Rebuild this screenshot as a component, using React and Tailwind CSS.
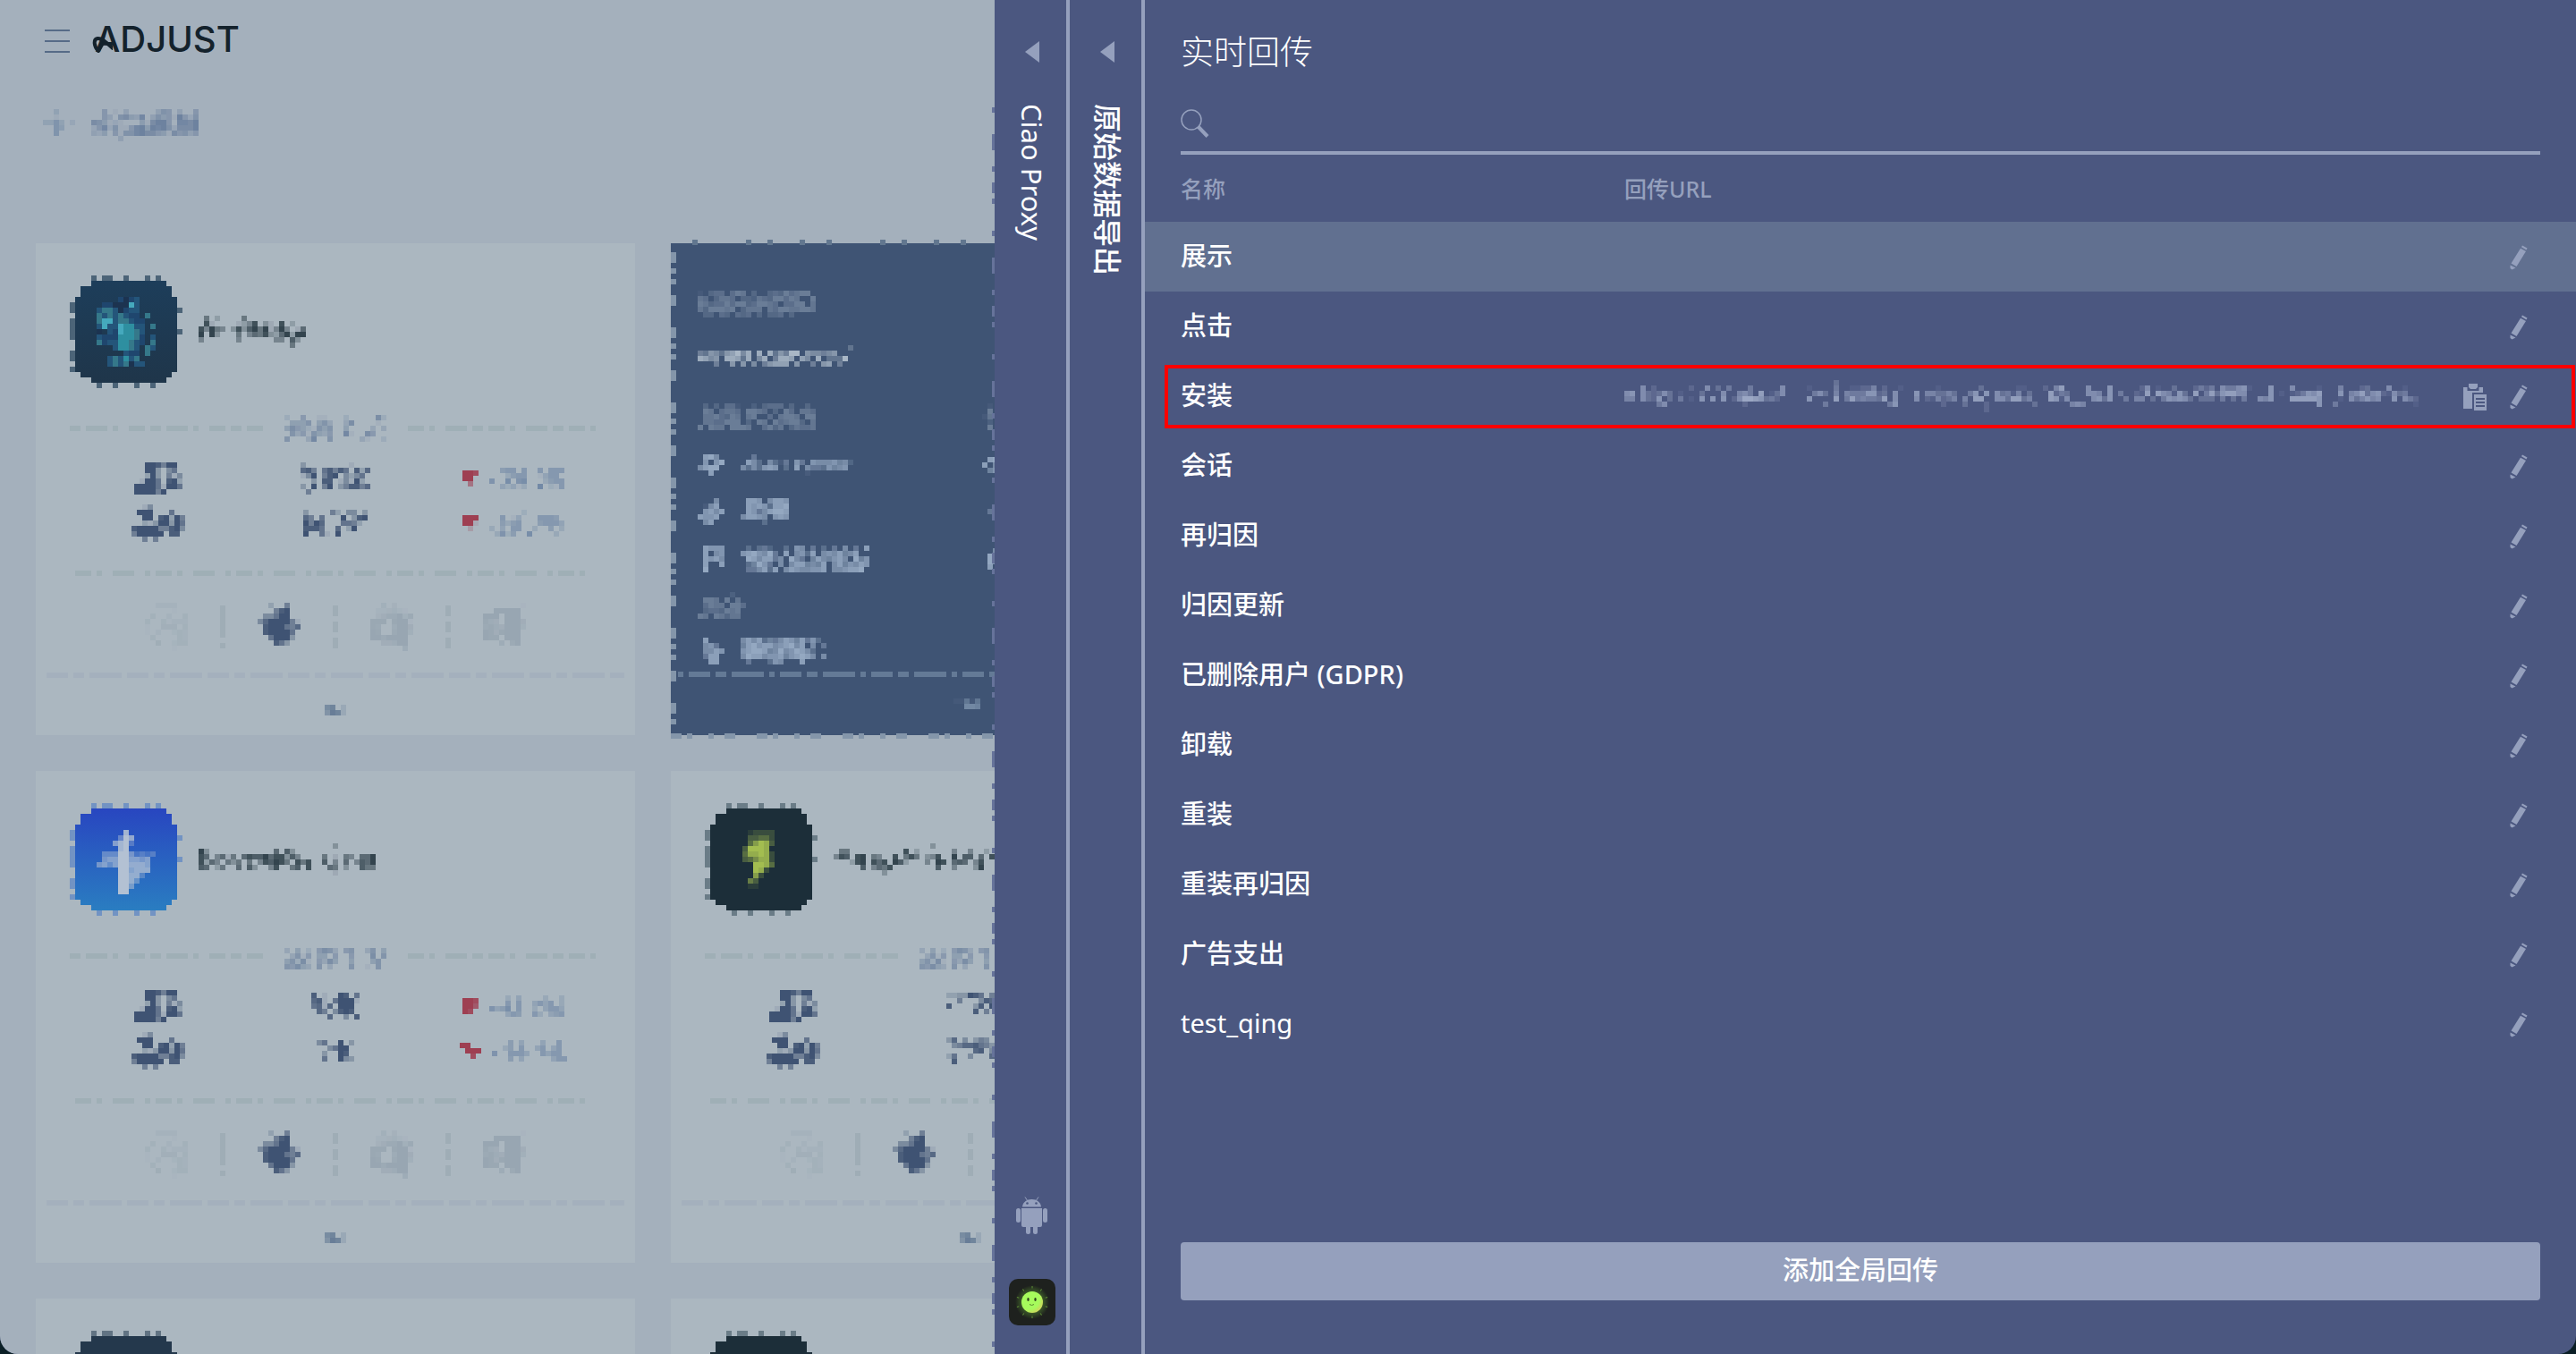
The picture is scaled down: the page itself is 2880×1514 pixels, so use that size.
import React from 'react';

const CELL = 6;

// A row is either plain digits ("..53.6") or sparse runs ("3:64 12:2").
// Digits are opacity steps, "." is empty.
function rowCells(row) {
  const runs = row.includes(':') ? row.split(' ').map((r) => r.split(':')) : [['0', row]];
  return runs.flatMap(([start, chars]) =>
    chars.split('').map((c, i) => ({ x: Number(start) + i, c })).filter((cell) => cell.c !== '.')
  );
}

function Mosaic({ rows, cols, color, palette, className = '' }) {
  const w = (cols || rows[0].length) * CELL;
  const h = rows.length * CELL;
  return (
    <svg
      aria-hidden="true"
      className={`shrink-0 ${className}`}
      width={w}
      height={h}
      viewBox={`0 0 ${w} ${h}`}
      shapeRendering="crispEdges"
    >
      {rows.map((row, y) =>
        rowCells(row).map(({ x, c }) => (
          <rect
            key={`${x}-${y}`}
            x={x * CELL}
            y={y * CELL}
            width={CELL}
            height={CELL}
            fill={palette ? palette[c] : color}
            fillOpacity={palette ? 1 : Number(c) / 9}
          />
        ))
      )}
    </svg>
  );
}

function DashX({ color, dash, className = '' }) {
  return (
    <svg aria-hidden="true" className={`h-[6px] ${className}`} shapeRendering="crispEdges">
      <line x1="0" y1="3" x2="2000" y2="3" stroke={color} strokeWidth="6" strokeDasharray={dash} />
    </svg>
  );
}

function DashY({ color, dash, className = '' }) {
  return (
    <svg aria-hidden="true" className={`w-[6px] ${className}`} shapeRendering="crispEdges">
      <line x1="3" y1="0" x2="3" y2="2000" stroke={color} strokeWidth="6" strokeDasharray={dash} />
    </svg>
  );
}

const TOOL_TEXT = [
  '..5.1.3.....365.3..5',
  '..53.67438.364519526',
  '764121...417995.8879',
  '25826115894989627779',
  '324.5166897754175635',
  '.....3..............',
];

const NAMES = {
  orbit: {
    cols: 20,
    rows: [
      '.5.2....5...........',
      '.81....1248.31.8.2..',
      '84954.38379591494.16',
      '9.93...5.46583269299',
      '4......4......44.73.',
      '.................5..',
    ],
  },
  bolt: {
    cols: 33,
    rows: [
      '25:3',
      '0:93 14:6 16:73',
      '0:86 3:46 5:15 8:68 10:779 13:688 16:37 18:4 23:5 25:1 27:54 30:669',
      '0:8264 5:53 7:5 9:5 11:48 13:7985 18:85 20:8 23:7 25:4 27:6 29:4769',
      '0:76 3:25 7:6 9:73 13:48 17:57 20:8 24:65 27:3 30:755',
      '25:1',
    ],
  },
  drop: {
    cols: 34,
    rows: [
      '18:3',
      '1:55 13:8 15:2 22:4 25:4 28:2',
      '0:487 4:89 7:54 11:8 13:585 17:34 19:8 22:9 24:77 27:6 29:8',
      '3:289 7:868 11:97 13:2 17:4 19:98 22:676 26:48',
      '5:7 7:46 9:58 19:7 22:4 26:39',
      '9:3',
    ],
  },
};

const LABELS = [
  [
    '2..5..11...2.....72',
    '.4446.463..37....1.',
    '475421646..4....3.3',
    '.63516435..81..75..',
    '6...38..6.....31..2',
  ],
  [
    '...................',
    '3.4.2.5763.56..36.4',
    '.3615.44.5..5...7.6',
    '46271.5374..4...46.',
    '65743.6.3...6..1.6.',
  ],
];

const USERS = ['..998599.', '..993.46.', '..293.514', '.1996.892', '999961996', '999959...'];
const USERS_ALT = [
  '..14......',
  '.999...6..',
  '..99.89295',
  '..21399396',
  '8999955894',
  '599999.88.',
  '..5.5.....',
];

const NUMBERS = [
  ['3........1...', '785.68586.827', '149.589.4246.', '..3.88.14192.', '3.9.59.358857', '.5...........'],
  ['3....52.44.3', '75.6...9.389', '9597...6652.', '8886..7.29..', '9..61.9.....'],
  ['8.1..98.6', '781.69991', '6717.999.', '.75.4898.', '...7..4.8'],
  ['46..9.3', '..4699.', '.3..98.', '.6..943'],
  ['2233986.5', '..5...487', '8....38.9', '.....8.5.', '.........'],
  ['37.4.354.', '.45778653', '.....78.4', '26..4...7', '.8.......'],
];

const ARROWS = [['998', '99.', '.5.'], ['999', '991', '.2.'], ['998', '997', '98.'], ['99..', '.999', '..8.']];

const PERCENTS = [
  ['..566.6..6.666.', '...3566..1466..', '7..8.78...3566.', '..42413..9.216.'],
  ['......2........', '..6.14...6665..', '..5356...56664.', '3.4.66..3..5.3.', '.3725..8....3..'],
  ['...3.4....3..3.', '...6.6..4646.3.', '7458.6..3.4664.', '...465..63.456.'],
  ['...5.4...4..6..', '..35.6..46.46..', '7..6664..6466..', '...5.4.....466.'],
];

const PLATFORM_ICONS = [
  {
    color: '#9aa9b3',
    rows: ['..3333..', '.....1..', '.4..3..4', '4..41333', '1..555.4', '1.3..243', '.4....43', '..6..244', '.....1..'],
  },
  {
    color: '#3f5373',
    rows: ['..2..5..', '...589..', '.44699..', '47999951', '.8999657', '.899996.', '..69993.', '...863..', '........'],
  },
  {
    color: '#98a6b2',
    rows: ['..4.3...', '.223421.', '.3577947', '888.8991', '87..6995', '98..7994', '9979999.', '..55699.', '......6.'],
  },
  {
    color: '#98a6b2',
    rows: ['.......1', '..99999.', '999.999.', '865.9995', '78659994', '9858999.', '988.999.', '...6.79.', '........'],
  },
];

const ICON_ART = {
  orbit: {
    from: '#1d3e5b',
    to: '#1f3549',
    edge: '#24405a',
    pad: 'top-6 left-[30px]',
    cols: 11,
    palette: { b: '#1f466e', n: '#1c3350', t: '#2e8fa0', T: '#45a9bd', g: '#35788a', s: '#24557a' },
    rows: [
      '....bnbs...',
      '.bbnnnTs...',
      'sggsnbss...',
      'gsgsgsbb.g.',
      'gTTsggsbb..',
      'sTssTttss.g',
      'n.sbTttgs..',
      'sbbbtttgb.s',
      'gbssttgsb.g',
      '...sttgs.gs',
      '.....sbb.g.',
      '..sgstsg...',
      '..sgsgnss..',
    ],
  },
  bolt: {
    from: '#2843c0',
    to: '#2a80c1',
    edge: '#5a83c4',
    pad: 'top-[30px] left-[30px]',
    cols: 11,
    color: '#b3c1d3',
    rows: [
      '.....8.....',
      '....497....',
      '...6893....',
      '....89.....',
      '.4449952323',
      '.566996656.',
      '5646997776.',
      '....996777.',
      '....99773..',
      '....9974...',
      '....995....',
      '....99.....',
    ],
  },
  drop: {
    from: '#1c2e39',
    to: '#1c2e39',
    edge: '#4f636f',
    pad: 'top-[30px] left-[42px]',
    cols: 6,
    color: '#a3bd50',
    rows: ['.12222', '.33442', '.47983', '399980', '488982', '346882', '..9984', '..982.', '..72..', '.53...', '.11...'],
  },
  navy: { from: '#24384c', to: '#24384c', edge: '#42566a', pad: 'top-0 left-0', cols: 1, color: '#24384c', rows: ['.'] },
};

function AppIcon({ kind }) {
  const art = ICON_ART[kind];
  return (
    <div className="relative h-[126px] w-[126px] shrink-0">
      <svg width="126" height="126" viewBox="0 0 126 126" shapeRendering="crispEdges" aria-hidden="true">
        <defs>
          <linearGradient id={`fill-${kind}`} x1="0" y1="0" x2="0" y2="1">
            <stop offset="0" stopColor={art.from} />
            <stop offset="1" stopColor={art.to} />
          </linearGradient>
          <clipPath id={`shape-${kind}`}>
            <rect x="24" y="6" width="84" height="114" />
            <rect x="12" y="12" width="102" height="102" />
            <rect x="6" y="24" width="114" height="84" />
          </clipPath>
        </defs>
        <rect width="126" height="126" fill={`url(#fill-${kind})`} clipPath={`url(#shape-${kind})`} />
        <g stroke={art.edge} strokeWidth="6" strokeOpacity="0.7">
          <line x1="24" y1="3" x2="102" y2="3" strokeDasharray="6 6 12 12 6 18" />
          <line x1="30" y1="123" x2="102" y2="123" strokeDasharray="6 12 6 18" />
          <line x1="3" y1="30" x2="3" y2="108" strokeDasharray="12 6 24 12" />
          <line x1="123" y1="36" x2="123" y2="84" strokeDasharray="6 18" />
        </g>
      </svg>
      <div className={`absolute ${art.pad}`}>
        <Mosaic rows={art.rows} cols={art.cols} color={art.color} palette={art.palette} />
      </div>
    </div>
  );
}

function StatRow({ users, number, arrow, percent }) {
  return (
    <div className="grid h-[42px] grid-cols-3 items-center">
      <div className="flex justify-center pl-2">
        <Mosaic rows={users} color="#3f5373" />
      </div>
      <div className="flex justify-center">
        <Mosaic rows={NUMBERS[number]} color="#3f5373" />
      </div>
      <div className="flex items-center justify-center gap-3">
        <Mosaic rows={ARROWS[arrow]} color="#9e3f52" />
        <Mosaic rows={PERCENTS[percent]} color="#7289a6" />
      </div>
    </div>
  );
}

function AppCard({ app }) {
  const name = NAMES[app.name];
  return (
    <article className="flex h-[550px] w-[670px] shrink-0 flex-col bg-[#abb7c0] pt-9">
      <div className="flex items-center gap-[18px] px-[38px]">
        <AppIcon kind={app.icon} />
        <Mosaic rows={name.rows} cols={name.cols} color="#33444e" />
      </div>
      <div className="mt-[30px] flex items-center gap-6 px-[38px]">
        <DashX color="#9fafb6" dash="12 6 24 6 6 12 18 6" className="w-0 flex-1" />
        <Mosaic rows={LABELS[app.label]} color="#6d829f" />
        <DashX color="#9fafb6" dash="18 6 6 12 24 6 12 6" className="w-0 flex-1" />
      </div>
      <div className="mt-5 flex flex-col gap-2 px-8">
        <StatRow users={USERS} number={app.numbers[0]} arrow={app.trend[0]} percent={app.trend[0]} />
        <StatRow users={USERS_ALT} number={app.numbers[1]} arrow={app.trend[1]} percent={app.trend[1]} />
      </div>
      <DashX color="#9fafb6" dash="18 6 6 12 24 12 6 6" className="mx-[44px] mt-8 shrink-0" />
      <div className="mt-[30px] flex items-center justify-center gap-[36px]">
        {PLATFORM_ICONS.map((icon, i) => (
          <React.Fragment key={i}>
            {i > 0 && <DashY color="#9fadb6" dash={i === 1 ? '36 6 6 6' : '12 6'} className="h-[48px]" />}
            <Mosaic rows={icon.rows} color={icon.color} />
          </React.Fragment>
        ))}
      </div>
      <DashX color="#a4b0bd" dash="24 6 12 6 36 6" className="mx-3 mt-6 shrink-0" />
      <Mosaic rows={['67.2', '5872']} color="#5f7692" className="mx-auto mt-[30px]" />
    </article>
  );
}

const MENU = [
  {
    cols: 22,
    box: 'h-[58px]',
    level: '#7f91a9',
    rows: ['1.344.465.3..34364566.', '54.3554.33254366465..6', '653446466346654.4466.5', '5366656.3555.546655665', '.33.43.434.3.334.3....'],
  },
  {
    cols: 30,
    box: 'h-[58px]',
    level: '#a9b7c6',
    rows: ['28:3', '0:4365367958.8.836499.655456', '0:8756.88738.58.4887.75.8.3339', '3:4..6.6.5.46777.6..4.67.4'],
  },
  {
    cols: 22,
    box: 'h-[78px]',
    level: '#7f91a9',
    side: ['.1', '.6', '15', '.2', '.6'],
    rows: ['1:3.3.441..2.3444.3..3..', '1:65.4554.6654.3.64.554', '1:5564365.56..4.5665.66', '1:5544666.3.65.645663.5', '0:6.655.6665..4635.35445'],
  },
  {
    cols: 21,
    box: 'h-[30px]',
    level: '#94a8c1',
    icon: ['.896.', '.7.79', '6899.', '..8..'],
    side: ['.89', '8.6', '.57'],
    rows: ['2:4', '1:863.6314.74.76667562', '0:6363787.3.8.64437567', '12:1'],
  },
  {
    cols: 9,
    box: 'h-[74px]',
    level: '#94a8c1',
    icon: ['...6.', '.168.', '.7868', '8778.', '.68..'],
    side: ['...', '.49', '..6'],
    rows: ['1:887.6887', '1:878738897', '1:87468998', '0:68876.7877', '4:3'],
  },
  {
    cols: 26,
    box: 'h-[32px]',
    level: '#94a8c1',
    icon: ['.8777', '.8.67', '.8786', '.8..8', '.9...'],
    side: ['..6', '.97', '.97', '.8.'],
    rows: ['1:3.342..3.76.4.3.4.6.4.8', '0:7897694.8.6738.6768568.', '1:9868846.964.5865786.957', '1:35974.6.6885658.6857687', '1:446838.68766778.667889'],
  },
  {
    cols: 9,
    box: 'h-[72px]',
    level: '#7f91a9',
    rows: ['6:2', '1:665.6.5', '1:4655.6647', '1:3443656', '0:65.65355'],
  },
  {
    cols: 18,
    box: 'h-[30px]',
    level: '#94a8c1',
    icon: ['.8...', '.674.', '.6687', '.488.', '..88.'],
    rows: ['0:686835468758473', '0:589788678968.6.4', '0:78998569679863', '0:69886778578986.6', '1:4...376...8'],
  },
];

function MenuCard() {
  return (
    <article className="relative flex h-[550px] w-[670px] shrink-0 flex-col bg-[#3f5474] pt-[39px]">
      <DashX color="#62778f" dash="6 54 6 18 6 30 6 24" className="absolute -top-1 left-6 w-full" />
      <DashX color="#8496aa" dash="12 6 6 18 6 12 12 24" className="absolute -bottom-1 left-0 w-full" />
      <DashY color="#8496aa" dash="12 6 6 6 6 12 12 24" className="absolute top-[10px] left-0 h-[530px]" />
      {MENU.map((item, i) => (
        <div key={i} className={`flex items-center pl-[30px] ${item.box}`}>
          {item.icon && <Mosaic rows={item.icon} color={item.level} className="mr-[18px]" />}
          <div className={item.icon ? 'w-[270px]' : 'w-[318px]'}>
            <Mosaic rows={item.rows} cols={item.cols} color={item.level} />
          </div>
          {item.side && <Mosaic rows={item.side} color={item.level} />}
        </div>
      ))}
      <DashX color="#647a96" dash="6 6 24 6 12 6 36 6" className="mx-2 mt-2 shrink-0" />
      <Mosaic rows={['11616', '..998']} color="#7288a3" className="mt-6 ml-[316px]" />
    </article>
  );
}

const APPS = {
  first: { icon: 'orbit', name: 'orbit', label: 0, numbers: [0, 1], trend: [0, 1] },
  second: { icon: 'bolt', name: 'bolt', label: 1, numbers: [2, 3], trend: [2, 3] },
  third: { icon: 'drop', name: 'drop', label: 1, numbers: [4, 5], trend: [2, 3] },
  fourth: { icon: 'navy', name: 'orbit', label: 0, numbers: [0, 1], trend: [0, 1] },
};

function Logo() {
  return (
    <div className="relative font-['Inter',sans-serif] text-[40px] leading-[48px] font-medium text-[#14222c]">
      ADJUST
      <svg className="absolute top-4 -left-1" width="24" height="24" viewBox="0 0 24 24" fill="none" aria-hidden="true">
        <path
          d="M24 18C17 12 12 6 7 7C2 8 3 16 8 21L12 14"
          stroke="currentColor"
          strokeWidth="4"
          strokeLinecap="round"
          strokeLinejoin="round"
        />
      </svg>
    </div>
  );
}

function Dashboard() {
  return (
    <section className="relative w-[1112px] shrink-0 overflow-hidden bg-[#a4b0bc]">
      <header className="flex h-[92px] items-center gap-7 pl-[50px]">
        <button type="button" aria-label="Menu" className="flex w-7 flex-col gap-[10px]">
          <span className="h-[2px] bg-[#566b87]" />
          <span className="h-[2px] bg-[#566b87]" />
          <span className="h-[2px] bg-[#566b87]" />
        </button>
        <div className="pb-1">
          <Logo />
        </div>
      </header>
      <div className="mt-[30px] flex gap-[18px] pl-12">
        <Mosaic rows={['..3...', '..1...', '3363.2', '..64..', '..6...']} color="#6d86a3" />
        <Mosaic rows={TOOL_TEXT} color="#6d829f" />
      </div>
      <div className="mt-[114px] flex flex-col gap-10 pl-10">
        <div className="flex gap-10">
          <AppCard app={APPS.first} />
          <MenuCard />
        </div>
        <div className="flex gap-10">
          <AppCard app={APPS.second} />
          <AppCard app={APPS.third} />
        </div>
        <div className="flex gap-10">
          <AppCard app={APPS.fourth} />
          <AppCard app={APPS.third} />
        </div>
      </div>
      <svg className="absolute top-[120px] right-0 h-full w-[3px]" shapeRendering="crispEdges" aria-hidden="true">
        <line x1="1" y1="0" x2="1" y2="2000" stroke="#66739a" strokeWidth="4" strokeDasharray="6 24 18 18 6 12 12 6 6 30" />
      </svg>
    </section>
  );
}

function Triangle() {
  return (
    <svg width="16" height="24" viewBox="0 0 16 24" aria-hidden="true">
      <path d="M16 0V24L0 12Z" fill="#95a0bd" />
    </svg>
  );
}

function AndroidIcon() {
  return (
    <svg width="36" height="42" viewBox="0 0 36 42" fill="#95a0bd" aria-hidden="true">
      <path d="M10 0.5L13 5M25 0.5L22 5" stroke="#95a0bd" strokeWidth="1" />
      <path d="M7 11.5C7.500 6 12 3 17.500 3C23 3 27.500 6 28 11.500Z" />
      <circle cx="12.500" cy="7.500" r="1.300" fill="#4b5780" />
      <circle cx="22.500" cy="7.500" r="1.300" fill="#4b5780" />
      <path d="M6 13H29V32Q29 34 27 34H8Q6 34 6 32Z" />
      <rect x="0" y="13" width="5" height="16" rx="2.500" />
      <rect x="30" y="13" width="5" height="16" rx="2.500" />
      <rect x="11" y="30" width="5" height="12" rx="2.500" />
      <rect x="19" y="30" width="5" height="12" rx="2.500" />
    </svg>
  );
}

function SunIcon() {
  return (
    <svg width="52" height="52" viewBox="0 0 52 52" aria-hidden="true">
      <defs>
        <radialGradient id="sun-glow">
          <stop offset="0.5" stopColor="#43682b" />
          <stop offset="1" stopColor="#1e211e" />
        </radialGradient>
        <radialGradient id="sun-face" cx="0.35" cy="0.35" r="0.8">
          <stop offset="0.6" stopColor="#a6fb5c" />
          <stop offset="1" stopColor="#dcc65c" />
        </radialGradient>
      </defs>
      <rect width="52" height="52" rx="10" fill="#1e211e" />
      <circle cx="26" cy="26" r="19" fill="url(#sun-glow)" />
      {[0, 36, 72, 108, 144, 180, 216, 252, 288, 324].map((a) => (
        <path key={a} d="M26 8V10.500" stroke="#5f8f36" strokeWidth="1" transform={`rotate(${a} 26 26)`} />
      ))}
      <circle cx="26" cy="26" r="12" fill="url(#sun-face)" />
      <ellipse cx="21.500" cy="23" rx="1.200" ry="2" fill="#2c421c" />
      <ellipse cx="29.500" cy="23" rx="1.200" ry="2" fill="#2c421c" />
      <path d="M23 28.500Q25.500 30.500 28 28.500" stroke="#5b8a33" fill="none" />
    </svg>
  );
}

function SearchIcon() {
  return (
    <svg width="32" height="32" viewBox="0 0 32 32" fill="none" stroke="#95a0bd" aria-hidden="true">
      <circle cx="12" cy="12" r="11" strokeWidth="1.500" />
      <path d="M19.500 19.500L30 30.500" strokeWidth="4" />
    </svg>
  );
}

function PencilIcon() {
  return (
    <svg width="20" height="28" viewBox="0 0 20 28" fill="#95a0bd" aria-hidden="true">
      <path d="M14 0.500L19.500 3.500L18.500 5.500L13 2.300Z" />
      <path d="M12 3.700L18 7L7.500 24L1.500 20.500Z" />
      <path d="M0.500 22.500L6.500 25.500L2.500 27.500L0.500 26Z" />
    </svg>
  );
}

function ClipboardIcon() {
  return (
    <svg width="26" height="30" viewBox="0 0 26 30" aria-hidden="true">
      <path d="M0 4H22V10H10V28H0Z" fill="#95a0bd" />
      <path d="M4.500 0H17.500V8H4.500Z" fill="#4b5780" />
      <path d="M6 0H16V4L14 6H8L6 4Z" fill="#95a0bd" />
      <path d="M12 12H26V30H12Z" fill="#95a0bd" />
      <path d="M14 17H24M14 21H24M14 25H24" stroke="#4b5780" strokeWidth="2" />
    </svg>
  );
}

function CollapsedColumn({ title, weight, children }) {
  return (
    <aside className="flex w-[84px] shrink-0 flex-col items-center border-r-4 border-[#95a0bd] pt-[46px] pb-8 pl-1">
      <button type="button" aria-label={title} className="h-6">
        <Triangle />
      </button>
      <h2 className={`mt-[46px] leading-[40px] whitespace-nowrap text-white [text-orientation:sideways] [writing-mode:vertical-rl] ${weight}`}>
        {title}
      </h2>
      {children}
    </aside>
  );
}

const URL_ROWS = [
  '39:3',
  '3:6 5:2 12:2 15:6 17:3 19:4 23:4 29:6 34:1 39:4 42:11225.2 51:1 58:1 66:3 73:11 78:2.58 86:6 90:7 96:26.1 102:3 106:2424.644671 120:7 124:6 129:1 133:5 137:23 142:6 145:1',
  '0:67.632363 10:1 14:3 18:6 21:564.8 27:136 35:463.5 41:54447723 50:6 54:7.553353 64:47.7 69:63415.3 79:8243 86:665.7 92:4 95:218.865173.8.48378866 120:7 122:1 124:124768 133:7 135:568367216 144:34',
  '0:55.6327 8:3.4 12:1 14:7.7.7 20:26998734 28:2 34:7 39:8 41:48454438 50:6 54:6.215235 63:5.88 69:663883 75:5 79:8716 87:6737 93:4 95:55.3 100:476763.333 111:4.3.4 118:657 124:888887 133:1 135:635756 143:7.642',
  '6:46 22:2 37:4 49:47 59:2 63:3 67:2 76:3 83:565 129:7 132:4 147:1',
  '67:2',
];

const CALLBACKS = [
  { name: '展示', active: true },
  { name: '点击' },
  { name: '安装', marked: true },
  { name: '会话' },
  { name: '再归因' },
  { name: '归因更新' },
  { name: '已删除用户 (GDPR)' },
  { name: '卸载' },
  { name: '重装' },
  { name: '重装再归因' },
  { name: '广告支出' },
  { name: 'test_qing', custom: true },
];

function CallbackTable() {
  return (
    <table className="w-full border-collapse text-left">
      <thead>
        <tr className="h-[75px] text-[25px] leading-[32px] text-[#95a0bd]">
          <th scope="col" className="w-[536px] pl-10 font-medium">名称</th>
          <th scope="col" className="font-medium">回传URL</th>
          <td className="w-[170px]" />
        </tr>
      </thead>
      <tbody>
        {CALLBACKS.map((cb) => (
          <tr
            key={cb.name}
            className={`relative h-[78px] text-[29px] leading-[40px] text-white ${cb.active ? 'bg-[#617090]' : ''}`}
          >
            <td className={`pb-[2px] pl-10 ${cb.custom ? 'font-normal' : 'font-medium'}`}>
              {cb.name}
              {cb.marked && (
                <span className="pointer-events-none absolute top-1 right-px bottom-[3px] left-[22px] border-4 border-[#ff0000]" />
              )}
            </td>
            <td>{cb.marked && <Mosaic rows={URL_ROWS} cols={148} color="#9ba7c4" />}</td>
            <td className="pt-[2px] pr-[54px]">
              <div className="flex items-center justify-end gap-[26px]">
                {cb.marked && (
                  <button type="button" aria-label="复制">
                    <ClipboardIcon />
                  </button>
                )}
                <button type="button" aria-label={`编辑 ${cb.name}`}>
                  <PencilIcon />
                </button>
              </div>
            </td>
          </tr>
        ))}
      </tbody>
    </table>
  );
}

export default function App() {
  return (
    <div className="h-screen bg-[#0b1f26] font-['Noto_Sans','Noto_Sans_CJK_SC',sans-serif]">
      <div className="flex h-full overflow-hidden rounded-b-[20px] bg-[#4b5780]">
        <Dashboard />
        <CollapsedColumn title="Ciao Proxy" weight="text-[31px] font-normal">
          <div className="mt-auto flex flex-col items-center gap-[50px]">
            <AndroidIcon />
            <SunIcon />
          </div>
        </CollapsedColumn>
        <CollapsedColumn title="原始数据导出" weight="text-[32px] font-medium" />
        <main className="flex min-w-0 flex-1 flex-col pt-9">
          <h1 className="px-10 text-[37px] leading-[44px] font-light text-white">实时回传</h1>
          <label className="mx-10 mt-[28px] flex h-[65px] shrink-0 items-center gap-4 border-b-4 border-[#95a0bd] pb-[2px]">
            <SearchIcon />
            <input type="search" aria-label="搜索" className="min-w-0 flex-1 bg-transparent text-[29px] text-white outline-none" />
          </label>
          <CallbackTable />
          <button
            type="button"
            className="mx-10 mt-auto mb-[60px] h-[65px] shrink-0 rounded-sm bg-[#95a0bd] pb-[3px] text-[29px] leading-[40px] font-medium text-white"
          >
            添加全局回传
          </button>
        </main>
      </div>
    </div>
  );
}
